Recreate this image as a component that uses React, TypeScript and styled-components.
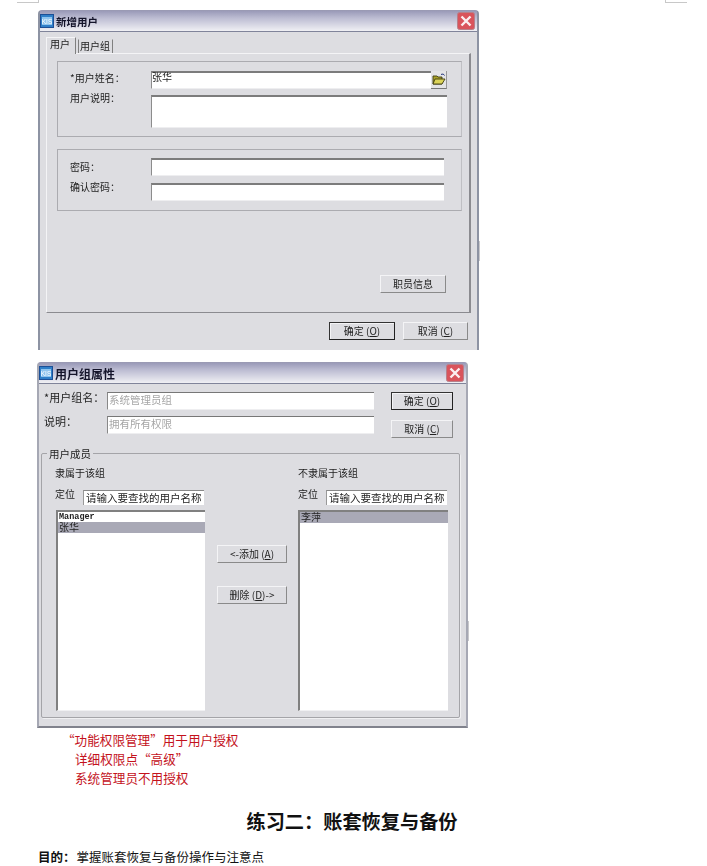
import React from 'react'
import styled, { createGlobalStyle } from 'styled-components'

const GlobalStyle = createGlobalStyle`
  html, body {
    margin: 0;
    padding: 0;
    background: #fff;
  }
  * {
    box-sizing: border-box;
  }
`

const KisIcon = () => (
  <svg width="14" height="14" viewBox="0 0 14 14">
    <rect x="0.5" y="0.5" width="13" height="13" fill="#2f7fc8" stroke="#1c4f96" />
    <rect x="2" y="3" width="10" height="8" fill="#8fc4ee" />
    <text x="7" y="10" fontSize="6.5" fontFamily="Liberation Sans" fill="#ffffff" textAnchor="middle">
      KIS
    </text>
  </svg>
)

const CloseIcon = () => (
  <svg width="18" height="18" viewBox="0 0 18 18">
    <rect x="0.5" y="0.5" width="17" height="17" rx="2" fill="#d9545c" stroke="#b8808a" />
    <path d="M4.5 4.5L13.5 13.5M13.5 4.5L4.5 13.5" stroke="#fbeef0" strokeWidth="2.4" />
  </svg>
)

const FolderIcon = () => (
  <svg width="14" height="13" viewBox="0 0 14 13">
    <path d="M1 3h4l1 1h4v7H1z" fill="#a8a028" stroke="#3f3d10" strokeWidth="0.9" />
    <path d="M1 11l2-5h10l-3 5z" fill="#dcd458" stroke="#3f3d10" strokeWidth="0.9" />
    <path d="M9 1.5c1.5-.8 3-.3 3.5 1" fill="none" stroke="#1d2f7a" strokeWidth="1" />
  </svg>
)

const App = () => (
  <Page>
    <GlobalStyle />
    <TopMarks>
      <CropMark $side="left" />
      <CropMark $side="right" />
    </TopMarks>

    <AddUserWindow>
      <TitleBar>
        <KisIcon />
        <TitleText>新增用户</TitleText>
        <CloseButton>
          <CloseIcon />
        </CloseButton>
      </TitleBar>
      <TabArea>
        <TabStrip>
          <Tab $active>用户</Tab>
          <Tab>用户组</Tab>
        </TabStrip>
        <TabPanel>
          <FormGroup $height={76} $top={9} $gap={6}>
            <FormRow>
              <FormLabel $shift={-2}>*用户姓名：</FormLabel>
              <Field $width={296} $height={18}>
                张华
                <FolderButton>
                  <FolderIcon />
                </FolderButton>
              </Field>
            </FormRow>
            <FormRow>
              <FormLabel $shift={-6}>用户说明：</FormLabel>
              <Field $width={296} $height={33} />
            </FormRow>
          </FormGroup>
          <FormGroup $height={62} $top={8} $gap={7}>
            <FormRow>
              <FormLabel $shift={0}>密码：</FormLabel>
              <Field $width={293} $height={18} />
            </FormRow>
            <FormRow>
              <FormLabel $shift={-5}>确认密码：</FormLabel>
              <Field $width={293} $height={18} />
            </FormRow>
          </FormGroup>
          <StaffButton>职员信息</StaffButton>
        </TabPanel>
        <DialogFooter>
          <PushButton $width={66} $default>
            确定 (<u>O</u>)
          </PushButton>
          <PushButton $width={65}>
            取消 (<u>C</u>)
          </PushButton>
        </DialogFooter>
      </TabArea>
    </AddUserWindow>

    <GroupWindow>
      <TitleBar>
        <KisIcon />
        <TitleText $large>用户组属性</TitleText>
        <CloseButton>
          <CloseIcon />
        </CloseButton>
      </TitleBar>
      <GroupHead>
        <GroupFields>
          <GroupRow>
            <GroupLabel>*用户组名：</GroupLabel>
            <GroupInput>系统管理员组</GroupInput>
          </GroupRow>
          <GroupRow>
            <GroupLabel>说明：</GroupLabel>
            <GroupInput>拥有所有权限</GroupInput>
          </GroupRow>
        </GroupFields>
        <GroupActions>
          <PushButton $width={62} $default>
            确定 (<u>O</u>)
          </PushButton>
          <PushButton $width={62}>
            取消 (<u>C</u>)
          </PushButton>
        </GroupActions>
      </GroupHead>
      <Members>
        <Legend>用户成员</Legend>
        <MemberColumn>
          <ColumnTitle>隶属于该组</ColumnTitle>
          <LocateRow>
            <LocateLabel>定位</LocateLabel>
            <LocateInput>请输入要查找的用户名称</LocateInput>
          </LocateRow>
          <MemberList $inset={1} $top={1}>
            <LatinItem>Manager</LatinItem>
            <MemberItem $selected>张华</MemberItem>
          </MemberList>
        </MemberColumn>
        <MoveButtons>
          <PushButton $width={70}>
            &lt;-添加 (<u>A</u>)
          </PushButton>
          <PushButton $width={70}>
            删除 (<u>D</u>)-&gt;
          </PushButton>
        </MoveButtons>
        <MemberColumn>
          <ColumnTitle>不隶属于该组</ColumnTitle>
          <LocateRow>
            <LocateLabel>定位</LocateLabel>
            <LocateInput>请输入要查找的用户名称</LocateInput>
          </LocateRow>
          <MemberList $inset={0} $top={0}>
            <MemberItem $selected>李萍</MemberItem>
          </MemberList>
        </MemberColumn>
      </Members>
    </GroupWindow>

    <Notes>
      <NoteLine>“功能权限管理”用于用户授权</NoteLine>
      <NoteLine $indent>详细权限点“高级”</NoteLine>
      <NoteLine $indent>系统管理员不用授权</NoteLine>
    </Notes>
    <SectionHeading>练习二：账套恢复与备份</SectionHeading>
    <Paragraph>
      <Lead>目的：</Lead>掌握账套恢复与备份操作与注意点
    </Paragraph>
  </Page>
)

export default App

const cjk = `"Noto Sans CJK SC", "Liberation Sans", sans-serif`

const Page = styled.div`
  width: 707px;
  height: 866px;
  overflow: hidden;
  background: #fff;
  font-family: ${cjk};
  color: #222;
`

const TopMarks = styled.div`
  height: 3px;
  padding: 0 20px 0 17px;
  display: flex;
  justify-content: space-between;
`

const CropMark = styled.div<{ $side: 'left' | 'right' }>`
  width: 22px;
  height: 3px;
  border-bottom: 1px solid #c8c8c8;
  ${(p) => (p.$side === 'left' ? 'border-right' : 'border-left')}: 1px solid #c8c8c8;
`

const WindowFrame = styled.div`
  position: relative;
  border-style: solid;
  border-color: #8d93a3;
  border-top-color: #9a9ab4;
  border-width: 1px 2px 0;
  border-radius: 4px 4px 0 0;
  background: #dddde1;
  filter: blur(0.3px);

  &::after {
    content: '';
    position: absolute;
    right: -3px;
    width: 1px;
    height: 20px;
    background: #c8c8cc;
  }
`

const AddUserWindow = styled(WindowFrame)`
  width: 441px;
  height: 340px;
  margin: 7px 0 0 38px;

  &::after {
    top: 230px;
  }
`

const GroupWindow = styled(WindowFrame)`
  width: 431px;
  height: 366px;
  margin: 12px 0 0 37px;
  border-color: #a6a8b4;
  border-top-color: #9a9ab4;
  border-bottom: 2px solid #80828c;

  &::after {
    top: 258px;
  }
`

const TitleBar = styled.div`
  height: 21px;
  padding: 0 1px 0 0;
  display: flex;
  align-items: center;
  gap: 2px;
  border-bottom: 1px solid #80849a;
  background: linear-gradient(#9a9ab8 0%, #bcbcd2 35%, #f0f0f4 100%);
`

const TitleText = styled.span<{ $large?: boolean }>`
  font-size: ${(p) => (p.$large ? 12 : 10.5)}px;
  font-weight: 700;
  color: #14142a;
`

const CloseButton = styled.div`
  margin-left: auto;
  margin-right: 1px;
  display: flex;
`

const TabArea = styled.div`
  height: 318px;
  padding: 5px 6px 0;
`

const TabStrip = styled.div`
  height: 16px;
  display: flex;
  align-items: flex-end;
  gap: 2px;
`

const Tab = styled.div<{ $active?: boolean }>`
  position: relative;
  z-index: 1;
  width: ${(p) => (p.$active ? 30 : 35)}px;
  height: ${(p) => (p.$active ? 17 : 14)}px;
  margin-bottom: ${(p) => (p.$active ? -1 : 0)}px;
  padding-left: ${(p) => (p.$active ? 3 : 1)}px;
  font-size: 10px;
  line-height: 12px;
  color: #222;
  background: #dddde1;
  border-right: 1px solid #808080;
  border-left: 1px solid ${(p) => (p.$active ? '#f4f4f6' : '#808080')};
  border-top: 1px solid ${(p) => (p.$active ? '#f4f4f6' : 'transparent')};
`

const TabPanel = styled.div`
  height: 260px;
  padding: 7px 7px 19px 10px;
  display: flex;
  flex-direction: column;
  gap: 12px;
  border-top: 1px solid #f4f4f6;
  border-left: 1px solid #f4f4f6;
  border-right: 2px solid #8b8b90;
  border-bottom: 1px solid #8b8b90;
`

const FormGroup = styled.div<{ $height: number; $top: number; $gap: number }>`
  height: ${(p) => p.$height}px;
  padding: ${(p) => p.$top}px 0 0 12px;
  display: flex;
  flex-direction: column;
  gap: ${(p) => p.$gap}px;
  border: 1px solid #ababb0;
  border-right-color: #c0c0c4;
`

const FormRow = styled.div`
  display: flex;
`

const FormLabel = styled.div<{ $shift: number }>`
  width: 81px;
  margin-top: ${(p) => p.$shift}px;
  font-size: 10px;
  line-height: 17px;
  color: #222;
`

const Field = styled.div<{ $width: number; $height: number }>`
  position: relative;
  width: ${(p) => p.$width}px;
  height: ${(p) => p.$height}px;
  font-size: 10px;
  line-height: 8px;
  color: #222;
  background: #fff;
  border-top: 2px solid #7c7c7c;
  border-left: 1px solid #8c8c8c;
  border-bottom: 1px solid #eeeef0;
`

const FolderButton = styled.div`
  position: absolute;
  top: -2px;
  right: 0;
  width: 16px;
  height: 18px;
  display: flex;
  align-items: center;
  justify-content: center;
  background: #e4e4e6;
  border-bottom: 1px solid #777;
  border-right: 1px solid #999;
`

const PushButton = styled.div<{ $width: number; $default?: boolean }>`
  width: ${(p) => p.$width}px;
  height: 18px;
  padding-bottom: 2px;
  display: flex;
  align-items: center;
  justify-content: center;
  font-size: 10px;
  color: #222;
  background: #dddde1;
  border: 1px solid;
  border-color: ${(p) => (p.$default ? '#333 #222 #222 #333' : '#f4f4f6 #8a8a8a #8a8a8a #f4f4f6')};
  box-shadow: ${(p) => (p.$default ? 'inset 1px 1px 0 #f4f4f6' : 'none')};
  white-space: pre;
`

const StaffButton = styled(PushButton).attrs({ $width: 66 })`
  margin-top: auto;
  align-self: flex-end;
  margin-right: 16px;
`

const DialogFooter = styled.div`
  padding: 9px 3px 0 0;
  display: flex;
  justify-content: flex-end;
  gap: 8px;
`

const GroupHead = styled.div`
  height: 69px;
  padding: 8px 13px 0 5px;
  display: flex;
  justify-content: space-between;
`

const GroupFields = styled.div`
  display: flex;
  flex-direction: column;
  gap: 6px;
`

const GroupRow = styled.div`
  display: flex;
`

const GroupLabel = styled.div`
  width: 63px;
  font-size: 11px;
  line-height: 10px;
  color: #222;
`

const GroupInput = styled.div`
  width: 267px;
  height: 18px;
  padding-left: 1px;
  font-size: 10.5px;
  line-height: 14px;
  color: #a6a6a6;
  background: #fff;
  border-top: 1px solid #777;
  border-left: 1px solid #888;
  border-bottom: 1px solid #eeeef0;
`

const GroupActions = styled.div`
  display: flex;
  flex-direction: column;
  gap: 10px;
`

const Members = styled.div`
  position: relative;
  width: 419px;
  height: 265px;
  margin-left: 2px;
  padding: 12px 0 0 13px;
  display: flex;
  border: 1px solid #a4a4a8;
  box-shadow: 1px 1px 0 #f0f0f2;
  border-radius: 2px;
`

const Legend = styled.div`
  position: absolute;
  top: -7px;
  left: 5px;
  padding: 0 2px;
  font-size: 10.5px;
  line-height: 13px;
  color: #222;
  background: #dddde1;
`

const MemberColumn = styled.div`
  width: 151px;
`

const ColumnTitle = styled.div`
  height: 14px;
  font-size: 10px;
  line-height: 14px;
  color: #222;
`

const LocateRow = styled.div`
  margin-top: 10px;
  display: flex;
`

const LocateLabel = styled.div`
  width: 28px;
  font-size: 10px;
  line-height: 8px;
  color: #222;
`

const LocateInput = styled.div`
  width: 121px;
  height: 15px;
  padding-left: 2px;
  font-size: 10.5px;
  line-height: 13px;
  white-space: nowrap;
  overflow: hidden;
  color: #222;
  background: #fff;
  border-top: 1px solid #888;
  border-left: 1px solid #999;
`

const MemberList = styled.div<{ $inset: number; $top: number }>`
  width: ${(p) => 150 - p.$inset}px;
  height: 201px;
  margin: 5px 0 0 ${(p) => p.$inset}px;
  padding-top: ${(p) => p.$top}px;
  background: #fff;
  border-top: 2px solid #808080;
  border-left: 2px solid #808080;
  border-bottom: 1px solid #f0f0f2;
`

const MemberItem = styled.div<{ $selected?: boolean }>`
  height: 11px;
  padding-left: 1px;
  font-size: 10px;
  line-height: 10px;
  color: #222;
  background: ${(p) => (p.$selected ? '#a9a9b6' : 'transparent')};
`

const LatinItem = styled(MemberItem)`
  height: 9px;
  line-height: 9px;
  font-family: 'Liberation Mono', monospace;
  font-size: 8.5px;
  font-weight: 700;
`

const MoveButtons = styled.div`
  width: 70px;
  margin: 79px 11px 0 11px;
  display: flex;
  flex-direction: column;
  gap: 23px;
`

const Notes = styled.div`
  margin: 2px 0 0 62px;
  font-size: 12.6px;
  line-height: 19px;
  color: #c4121c;
`

const NoteLine = styled.div<{ $indent?: boolean }>`
  padding-left: ${(p) => (p.$indent ? 13 : 0)}px;
`

const SectionHeading = styled.h2`
  margin: 20px 3px 0 0;
  font-size: 19.2px;
  line-height: 28px;
  font-weight: 700;
  text-align: center;
  color: #111;
`

const Paragraph = styled.p`
  margin: 13px 0 0 38px;
  font-size: 12.5px;
  line-height: 18px;
  color: #111;
  white-space: nowrap;
`

const Lead = styled.strong`
  margin-right: 1px;
`
